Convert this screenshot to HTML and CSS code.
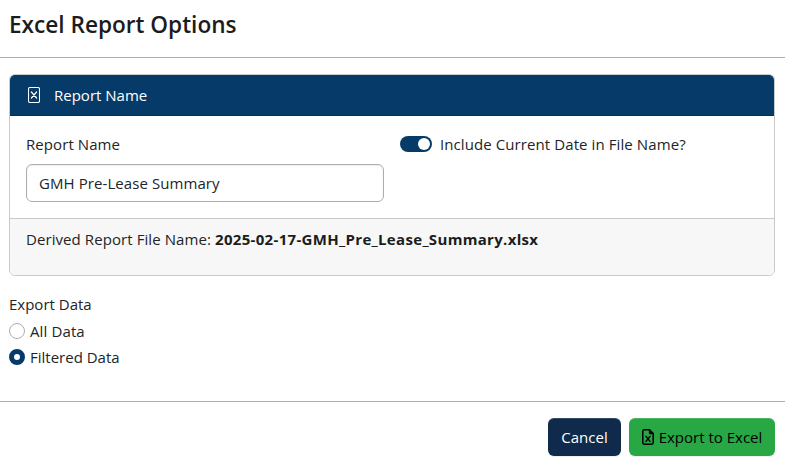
FILE: index.html
```
<!DOCTYPE html>
<html lang="en">
<head>
<meta charset="utf-8">
<title>Excel Report Options</title>
<link rel="stylesheet" href="styles.css">
</head>
<body>
<header class="modal-header"><h1 class="modal-title">Excel Report Options</h1></header>
<main class="modal-body">
  <section class="card">
    <div class="card-header">
      <svg class="header-icon" viewBox="0 0 12 16" fill="none" stroke="currentColor"><rect x=".5" y=".5" width="11" height="15" rx="1.5" stroke-width="1.1"/><path d="M3.4 5l5.2 6M8.6 5l-5.2 6" stroke-width="1.2" stroke-linecap="round"/></svg>
      <span class="header-text">Report Name</span>
    </div>
    <div class="card-body">
      <div class="field">
        <label class="label" for="name"><span class="name-label">Report Name</span></label>
        <input class="input" id="name" type="text" value="GMH Pre-Lease Summary">
      </div>
      <div class="switch-row">
        <span class="switch"></span>
        <span class="switch-label">Include Current Date in File Name?</span>
      </div>
    </div>
    <div class="card-footer"><span class="derived">Derived Report File Name:</span><strong class="filename">2025-02-17-GMH_Pre_Lease_Summary.xlsx</strong></div>
  </section>
  <section class="export">
    <div class="export-title"><span class="export-label">Export Data</span></div>
    <div class="option"><span class="radio"></span><span class="all-label">All Data</span></div>
    <div class="option"><span class="radio checked"></span><span class="filtered-label">Filtered Data</span></div>
  </section>
</main>
<footer class="modal-footer">
  <button class="btn cancel"><span class="cancel-text">Cancel</span></button>
  <button class="btn excel">
    <svg class="file-icon" viewBox="0 0 12 16" fill="none" stroke="currentColor"><path d="M7.5.8H2.2Q.8.8.8 2.2v11.6q0 1.4 1.4 1.4h7.6q1.4 0 1.4-1.4V4.6z" stroke-width="1.5" stroke-linejoin="round"/><path d="M7.2.8v4.1h4z" fill="currentColor" stroke-width=".5"/><path d="M4 7.4l4 5M8 7.4l-4 5" stroke-width="1.5" stroke-linecap="round"/></svg>
    <span class="excel-text">Export to Excel</span>
  </button>
</footer>
</body>
</html>
```
FILE: styles.css
```
* { box-sizing: border-box; }
body {
  margin: 0;
  height: 461px;
  display: flex;
  flex-direction: column;
  overflow: hidden;
  background: #fff;
  color: #212529;
  font: 15px/24px "Open Sans", "Noto Sans", sans-serif;
  white-space: nowrap;
}
.modal-header { height: 58px; padding: 10px 9px 0; border-bottom: 1px solid #adadad; }
.modal-title { margin: 0; font-size: 22.6px; line-height: 30px; font-weight: 600; color: #1c1c1c; }
.modal-body { height: 343px; padding: 16px 10px 0 9px; }
.card { height: 202px; border: 1px solid #c9cacb; border-radius: 6px; overflow: hidden; }
.card-header {
  height: 41px;
  padding-left: 18px;
  display: flex;
  align-items: center;
  gap: 15px;
  background: #063b69;
  border-bottom: 1px solid #032f58;
  color: #fff;
  font-weight: 500;
}
.header-icon { width: 12px; height: 16px; }
.header-text { margin-left: -1px; }
.card-body { height: 102px; padding: 16px 16px 0; display: flex; gap: 16px; }
.field { width: 358px; }
.label { display: block; height: 32px; }
.name-label { letter-spacing: .08px; }
.input {
  display: block;
  width: 100%;
  height: 38px;
  padding: 0 12px;
  border: 1px solid #adadad;
  border-radius: 6px;
  background: #fff;
  color: #212529;
  box-shadow: inset 0 1px 2px rgba(0, 0, 0, .075);
  font: inherit;
  letter-spacing: .08px;
}
.switch-row { height: 24px; display: flex; align-items: center; gap: 8px; }
.switch-label { letter-spacing: .09px; }
.switch { width: 32px; height: 16px; padding: 2px; border-radius: 8px; background: #063b69; display: flex; justify-content: flex-end; }
.switch::after { content: ""; width: 12px; height: 12px; border-radius: 50%; background: #fff; }
.card-footer { height: 57px; padding: 8px 16px; display: flex; gap: 4px; background: #f7f7f7; border-top: 1px solid #c9cacb; }
.derived { letter-spacing: .08px; }
.filename { color: #1b1d20; font-weight: 700; letter-spacing: .32px; }
.export { padding-top: 16px; }
.export-title { height: 26px; }
.option { height: 26px; display: flex; align-items: center; gap: 5px; }
.all-label { letter-spacing: .12px; }
.radio { width: 16px; height: 16px; border: 1px solid #adadad; border-radius: 50%; }
.checked { border: 5px solid #063b69; background: #fff; }
.modal-footer { height: 60px; padding: 16px 10px 0; display: flex; justify-content: flex-end; gap: 8px; border-top: 1px solid #adadad; }
.btn {
  height: 38px;
  padding: 0;
  border: 0;
  border-radius: 6px;
  display: flex;
  align-items: center;
  justify-content: center;
  gap: 5px;
  font: inherit;
  box-shadow: inset 0 1px 0 rgba(255, 255, 255, .15), 0 1px 1px rgba(0, 0, 0, .075);
}
.cancel { width: 73px; background: #0f2a4a; color: #fff; font-weight: 500; }
.excel { width: 146px; background: #28a745; color: #000; }
.file-icon { width: 12px; height: 16px; }
```
